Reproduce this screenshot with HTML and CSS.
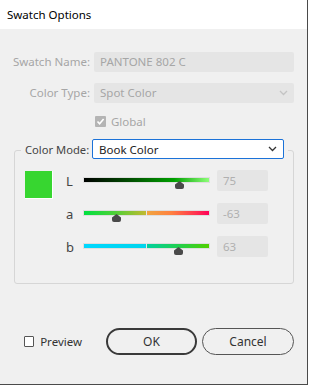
FILE: index.html
```html
<!DOCTYPE html>
<html lang="en">
<head>
    <meta charset="UTF-8">
    <title>Swatch Options</title>
    <link rel="stylesheet" href="styles.css">
</head>
<body>
    <div class="dialog">
        <!-- Title bar -->
        <div class="titlebar">Swatch Options</div>

        <div class="content">
            <div class="field-grid">
                <label class="field-label">Swatch Name:</label>
                <div class="field-input">PANTONE 802 C</div>

                <label class="field-label">Color Type:</label>
                <div class="field-input field-select">
                    <span>Spot Color</span>
                    <svg class="chevron" width="9" height="6" viewBox="0 0 9 6"><polyline points="1,1 4.5,4.5 8,1" fill="none" stroke="#c4c4c4" stroke-width="1.3"/></svg>
                </div>
            </div>

            <div class="check-row">
                <span class="checkbox checkbox-disabled">
                    <svg width="11" height="11" viewBox="0 0 11 11"><polyline points="2.5,5.5 4.6,7.8 8.6,3" fill="none" stroke="#fff" stroke-width="1.6"/></svg>
                </span>
                <span class="check-text">Global</span>
            </div>

            <!-- Color mode group -->
            <div class="group">
                <div class="legend">
                    <span class="legend-label">Color Mode:</span>
                    <div class="mode-select">
                        <span>Book Color</span>
                        <svg class="chevron" width="9" height="6" viewBox="0 0 9 6"><polyline points="1,1 4.5,4.5 8,1" fill="none" stroke="#333" stroke-width="1.3"/></svg>
                    </div>
                </div>

                <div class="group-body">
                    <div class="swatch"></div>
                    <div class="sliders">
                        <div class="slider-row">
                            <span class="channel">L</span>
                            <div class="track track-l">
                                <span class="thumb" style="left: 95px"></span>
                            </div>
                            <div class="value">75</div>
                        </div>
                        <div class="slider-row">
                            <span class="channel">a</span>
                            <div class="track track-a">
                                <span class="divider"></span>
                                <span class="thumb" style="left: 32px"></span>
                            </div>
                            <div class="value">-63</div>
                        </div>
                        <div class="slider-row">
                            <span class="channel">b</span>
                            <div class="track track-b">
                                <span class="divider"></span>
                                <span class="thumb" style="left: 94px"></span>
                            </div>
                            <div class="value">63</div>
                        </div>
                    </div>
                </div>
            </div>

            <!-- Footer -->
            <div class="footer">
                <label class="preview">
                    <span class="checkbox"></span>
                    <span>Preview</span>
                </label>
                <button class="btn btn-primary">OK</button>
                <button class="btn">Cancel</button>
            </div>
        </div>
    </div>
</body>
</html>
```

FILE: styles.css
```css
body {
    margin: 0;
    padding: 0;
    background-color: #ffffff;
    font-family: "Noto Sans", "Open Sans", sans-serif;
    font-size: 11.5px;
    color: #333333;
}
.dialog {
    width: 308px;
    height: 385px;
    box-sizing: border-box;
    background-color: #f0f0f0;
    border-right: 1px solid #4a4a4a;
    border-bottom: 1px solid #4a4a4a;
}
.titlebar {
    height: 29px;
    line-height: 30px;
    padding-left: 7px;
    background-color: #ffffff;
    color: #000000;
    font-size: 11.5px;
}
.content {
    padding-top: 23px;
}
.field-grid {
    display: grid;
    grid-template-columns: 90px 200px;
    column-gap: 4px;
    row-gap: 11px;
}
.field-label {
    text-align: right;
    line-height: 20px;
    color: #a6a6a6;
    white-space: nowrap;
}
.field-input {
    height: 20px;
    line-height: 20px;
    padding-left: 6px;
    background-color: #e5e5e5;
    color: #a6a6a6;
    border-radius: 2px;
}
.field-select {
    display: flex;
    justify-content: space-between;
    align-items: center;
    padding-right: 6px;
}
.check-row {
    display: flex;
    align-items: center;
    height: 11px;
    margin: 13px 0 0 95px;
    color: #a6a6a6;
}
.check-text {
    margin-left: 5px;
}
.checkbox {
    display: inline-flex;
    width: 11px;
    height: 11px;
    box-sizing: border-box;
    border: 1px solid #555555;
    border-radius: 1px;
    background-color: #ffffff;
}
.checkbox-disabled {
    border: none;
    background-color: #b4b4b4;
}

.group {
    width: 280px;
    box-sizing: border-box;
    margin: 23px 0 0 14px;
    border: 1px solid #d6d6d6;
    border-radius: 3px;
    padding-bottom: 26px;
}
.legend {
    display: flex;
    align-items: center;
    width: fit-content;
    margin: -12px 0 0 6px;
    padding: 0 4px;
    background-color: #f0f0f0;
    white-space: nowrap;
}
.legend-label {
    flex-shrink: 0;
    width: 63px;
    color: #444444;
    font-size: 11.2px;
}
.mode-select {
    display: flex;
    flex-shrink: 0;
    justify-content: space-between;
    align-items: center;
    width: 192px;
    height: 20px;
    box-sizing: border-box;
    margin-left: 4px;
    padding: 0 6px 0 6px;
    background-color: #ffffff;
    border: 1px solid #1b72d8;
    border-radius: 2px;
    color: #222222;
}
.group-body {
    display: flex;
    align-items: flex-start;
    padding: 11px 0 0 10px;
}
.swatch {
    flex-shrink: 0;
    width: 28px;
    height: 28px;
    box-sizing: border-box;
    margin-top: 1px;
    background-color: #37d630;
    border-right: 1px solid #ffffff;
    border-bottom: 1px solid #ffffff;
}
.sliders {
    display: flex;
    flex-direction: column;
    gap: 12px;
    margin-left: 13px;
}
.slider-row {
    display: grid;
    grid-template-columns: 10px 127px 51px;
    column-gap: 7px;
    align-items: center;
    height: 21px;
}
.channel {
    color: #444444;
    font-size: 13px;
}
.track {
    position: relative;
    height: 6px;
    box-sizing: border-box;
    border: 1px solid #dedede;
    margin-top: -1px;
}
.track-l {
    background: linear-gradient(to right, #000000 0%, #004a00 35%, #00a000 72%, #8dff78 100%);
}
.track-a {
    background: linear-gradient(to right, #00e040 0%, #50d038 25%, #c4b930 50%, #f0a640 50%, #ff8040 70%, #ff3050 90%, #ff0058 100%);
}
.track-b {
    background: linear-gradient(to right, #00d8ff 0%, #00d4ec 50%, #00d0a0 50%, #20d050 75%, #50d000 100%);
}
.divider {
    position: absolute;
    left: 62px;
    top: -1px;
    width: 1px;
    height: 6px;
    background-color: #e8e8e8;
}
.thumb {
    position: absolute;
    top: 3px;
    width: 9px;
    height: 8px;
    margin-left: -4px;
    background-color: #4a4a4a;
    clip-path: polygon(50% 0, 100% 45%, 100% 100%, 0 100%, 0 45%);
    border-radius: 0 0 2px 2px;
}
.value {
    height: 21px;
    line-height: 21px;
    padding-left: 6px;
    background-color: #e5e5e5;
    color: #b0b0b0;
    border-radius: 2px;
}

.footer {
    display: flex;
    align-items: center;
    margin-top: 44px;
    padding-left: 24px;
}
.preview {
    display: flex;
    align-items: center;
    gap: 6px;
    width: 58px;
    color: #333333;
}
.btn {
    flex-shrink: 0;
    height: 27px;
    box-sizing: border-box;
    border: 1px solid #555555;
    border-radius: 14px;
    background-color: #f0f0f0;
    color: #333333;
    font-family: "Noto Sans", "Open Sans", sans-serif;
    font-size: 12px;
    padding: 0;
}
.btn-primary {
    width: 91px;
    margin-left: 24px;
    border: 2px solid #3a3a3a;
}
.btn:last-child {
    width: 92px;
    margin-left: 5px;
}
```
